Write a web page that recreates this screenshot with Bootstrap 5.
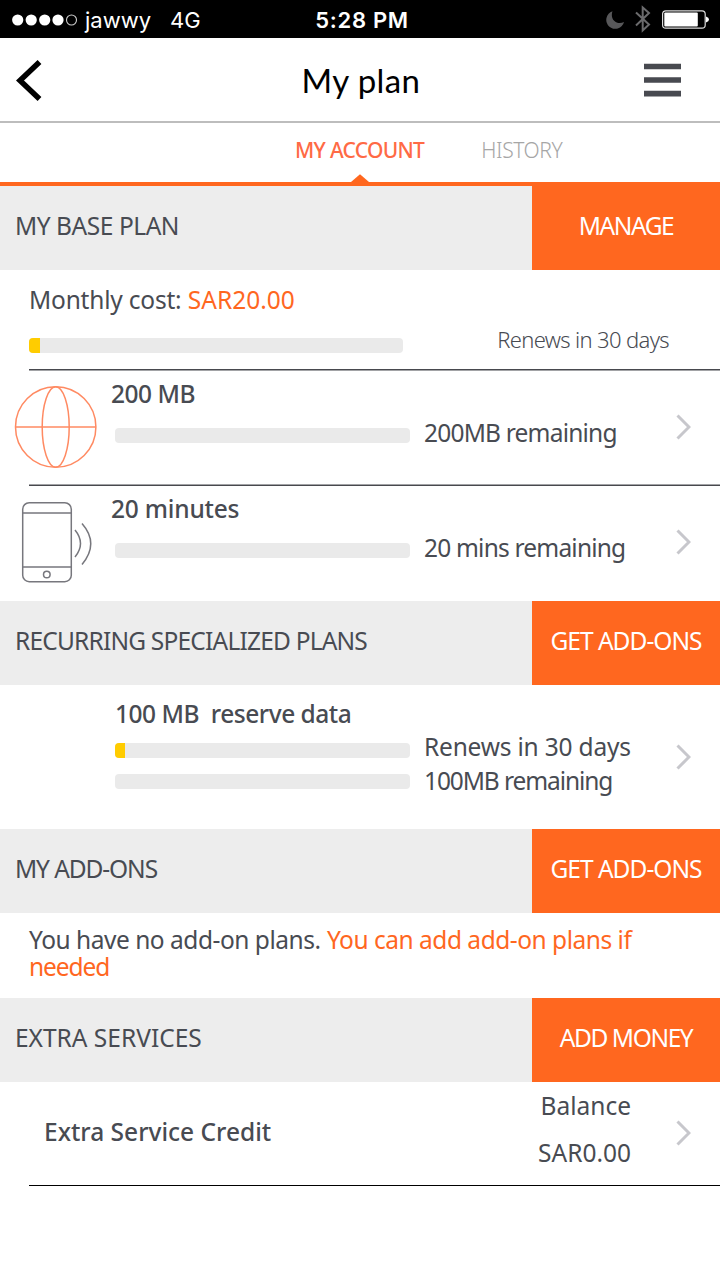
<!DOCTYPE html>
<html lang="en">
<head>
<meta charset="utf-8">
<meta name="viewport" content="width=device-width, initial-scale=1">
<title>My plan</title>
<link href="https://cdn.jsdelivr.net/npm/bootstrap@5.3.0/dist/css/bootstrap.min.css" rel="stylesheet">
<style>
body{font-family:"Noto Sans","Open Sans",sans-serif;font-size:24.5px;line-height:30px;color:#484b52;background:#fff;overflow-x:hidden}
svg{display:block;flex:none}
span{white-space:nowrap}
.status{height:38px;font-family:Inter,sans-serif;font-size:22px;padding:1px 11px 0 11px}
.status>div{flex:1 1 0}
.status .clock{font-weight:600;flex:none;letter-spacing:.7px;padding-left:4px}
.carrier{margin-left:6px}
.net{margin-left:19px}
.appbar{height:85px;border-bottom:2px solid #bdbdbd;padding:0 39px 0 15px}
.appbar>div{flex:1 1 0}
.title-text{font:400 33px/40px Lato,sans-serif;color:#000;letter-spacing:.4px;padding-left:26px}
.tabs-row{height:63px;border-bottom:4px solid #ff671f;font-size:21px;position:relative;padding:12px 0 0 295px;gap:57px}
.tab-on{color:#ff6a45;font-weight:500;letter-spacing:-.7px}
.tab-off{color:#a6a6a6;font-weight:300;letter-spacing:-.4px}
.caret{position:absolute;left:351px;bottom:0}
.sec{height:84px;background:#ededed}
.sec-title{padding:0 0 4px 15px;letter-spacing:-.45px}
.act{width:188px;background:#ff671f;color:#fff;border:0;border-radius:0;padding:0 0 4px;font-size:24.5px;line-height:30px;font-weight:400;letter-spacing:-1px}
.act:hover{background:#f05c15;color:#fff}
.tight-1{letter-spacing:-1.1px}
.tight-2{letter-spacing:-1.4px}
.tight-3{letter-spacing:-.8px}
.tight-4{letter-spacing:-.48px}
.tight-5{letter-spacing:-.2px}
.tight-0{letter-spacing:0}
.o{color:#ff671f}
.meter{height:15px;border-radius:4px;background:#eaeaea;--bs-progress-bar-bg:#fc0}
.wide{width:374px}
.std{width:295px}
.usage .d-flex>.meter{margin-top:4px}
.meter-line{margin-top:9px;gap:14px}
.rule{height:2px;margin-left:29px}
.rule-a{background:linear-gradient(#48494e 50%,#a2a3a6 50%)}
.rule-b{background:linear-gradient(#a2a3a6 50%,#48494e 50%)}
.rule-c{height:1px;background:#000}
.summary{height:99px;padding:15px 51px 0 29px}
.summary .meter{margin-top:23px}
.usage{height:114px;padding-right:29px}
.usage>svg{margin-bottom:2px}
.usage-data{height:113px}
.usage-reserve{height:144px;padding-left:115px}
.usage-reserve>svg{margin-bottom:0}
.usage-credit{height:103px;padding-left:44px}
.pic{width:111px}
.usage-body{padding-top:8px}
.med{font-weight:500}
.thin{font-size:22px;font-weight:350;letter-spacing:-.65px;margin-top:9px}
.note{height:85px;padding:13px 50px 0 29px;line-height:27px}
.balance{line-height:47px;margin:-10px 45px 0 0}
.credit-name{padding-bottom:3px}
.reserve-meters{padding-top:14px}
.reserve-info{margin:1px 0 0 14px;line-height:33.500px}
</style>
</head>
<body>
<header>
  <div class="status bg-black text-white d-flex align-items-center">
    <div class="d-flex align-items-center">
      <svg width="68" height="14" viewBox="0 0 68 14" fill="#fff"><circle cx="6.7" cy="7" r="5.6"/><circle cx="20.2" cy="7" r="5.6"/><circle cx="33.7" cy="7" r="5.6"/><circle cx="47" cy="7" r="5.6"/><circle cx="60.5" cy="7" r="5" fill="none" stroke="#ccc" stroke-width="1.1"/></svg>
      <span class="carrier">jawwy</span><span class="net">4G</span>
    </div>
    <div class="clock">5:28 PM</div>
    <div class="d-flex justify-content-end align-items-center">
      <svg width="104" height="30" viewBox="605 5 104 30" fill="none">
        <path d="M612.500 11.300A9 9 0 1 0 624 22C617 25.500 609.500 19.500 612.500 11.300z" fill="#58585a"/>
        <path d="M636 12.500l13 12-6.300 6V7.500l6.300 5.500L636 25.500" stroke="#6b6b6d" stroke-width="2"/>
        <rect x="662.600" y="10.800" width="42.600" height="17.400" rx="3.200" stroke="#ddd" stroke-width="1.200"/>
        <rect x="664.300" y="12.500" width="33.500" height="14" rx="1" fill="#fff"/>
        <path d="M706 16.500q3 .8 3 3t-3 3z" fill="#fff"/>
      </svg>
    </div>
  </div>
  <div class="appbar d-flex align-items-center">
    <div><svg width="28" height="42" viewBox="14.500 60 28 42" fill="none" stroke="#000" stroke-width="5.500"><path d="M39 63L19.500 81.500 39 100"/></svg></div>
    <h1 class="title-text m-0">My plan</h1>
    <div class="d-flex justify-content-end"><svg width="37" height="34" viewBox="0 0 37 34" fill="#484a50"><path d="M0 .7h37v5.600H0zM0 14.300h37v5.500H0zM0 27.700h37v5.800H0z"/></svg></div>
  </div>
</header>
<nav class="tabs-row d-flex">
  <span class="tab-on">MY ACCOUNT</span>
  <span class="tab-off">HISTORY</span>
  <svg class="caret" width="18" height="8" viewBox="0 0 18 8" fill="#ff671f"><path d="M0 8L9 .3 18 8z"/></svg>
</nav>
<main>
  <div class="sec d-flex align-items-stretch">
    <div class="sec-title flex-grow-1 d-flex align-items-center"><span>MY BASE PLAN</span></div>
    <button class="act tight-2 btn"><span>MANAGE</span></button>
  </div>
  <div class="summary">
    <div><span class="tight-5">Monthly cost:</span> <span class="o">SAR20.00</span></div>
    <div class="d-flex justify-content-between">
      <div class="progress meter wide"><div class="progress-bar" style="width:3%"></div></div>
      <span class="thin">Renews in 30 days</span>
    </div>
  </div>
  <div class="rule rule-a"></div>
  <div class="usage usage-data d-flex">
    <div class="pic" style="padding:14px 0 0 14px">
      <svg width="84" height="84" viewBox="0 0 84 84" fill="none" stroke="#ff8a62" stroke-width="1.500"><circle cx="41.700" cy="42" r="40.200"/><ellipse cx="41.700" cy="42" rx="13.500" ry="40.200"/><path d="M1.500 42h80.400"/></svg>
    </div>
    <div class="usage-body flex-grow-1">
      <div class="med"><span class="tight-4">200 MB</span></div>
      <div class="meter-line d-flex align-items-center ms-1">
        <div class="progress meter std"></div><span class="tight-3">200MB remaining</span>
      </div>
    </div>
    <svg class="align-self-center" width="15" height="26" viewBox="0 0 15 26" fill="none" stroke="#c7c7cc" stroke-width="3"><path d="M1.500 1.500L13 13 1.500 24.500"/></svg>
  </div>
  <div class="rule rule-b"></div>
  <div class="usage d-flex">
    <div class="pic" style="padding:14px 0 0 20px">
      <svg width="74" height="84" viewBox="20 500 74 84" fill="none" stroke="#77777d" stroke-width="1.500"><rect x="22.700" y="502.700" width="48.600" height="79" rx="6.500"/><path d="M22.700 513h48.600M22.700 567h48.600"/><circle cx="46.800" cy="574.500" r="3.300"/><path d="M75 530q11 13.500 0 27M82 523.500q17.500 20 0 41"/></svg>
    </div>
    <div class="usage-body flex-grow-1">
      <div class="med"><span class="tight-5">20 minutes</span></div>
      <div class="meter-line d-flex align-items-center ms-1">
        <div class="progress meter std"></div><span class="tight-3">20 mins remaining</span>
      </div>
    </div>
    <svg class="align-self-center" width="15" height="26" viewBox="0 0 15 26" fill="none" stroke="#c7c7cc" stroke-width="3"><path d="M1.500 1.500L13 13 1.500 24.500"/></svg>
  </div>
  <div class="rule" style="height:1px"></div>
  <div class="sec d-flex align-items-stretch">
    <div class="sec-title flex-grow-1 d-flex align-items-center"><span class="tight-3">RECURRING SPECIALIZED PLANS</span></div>
    <button class="act btn"><span>GET ADD-ONS</span></button>
  </div>
  <div class="usage usage-reserve d-flex">
    <div class="usage-body pt-0 flex-grow-1" style="margin-top:14px">
      <div class="med"><span class="tight-4">100 MB&nbsp; reserve data</span></div>
      <div class="d-flex">
        <div class="reserve-meters">
          <div class="progress meter std"><div class="progress-bar" style="width:3.3%"></div></div>
          <div class="progress meter std mt-3"></div>
        </div>
        <div class="reserve-info"><span class="tight-5">Renews in 30 days</span><br><span class="tight-1">100MB remaining</span></div>
      </div>
    </div>
    <svg class="align-self-center" width="15" height="26" viewBox="0 0 15 26" fill="none" stroke="#c7c7cc" stroke-width="3"><path d="M1.500 1.500L13 13 1.500 24.500"/></svg>
  </div>
  <div class="sec d-flex align-items-stretch">
    <div class="sec-title flex-grow-1 d-flex align-items-center"><span class="tight-1">MY ADD-ONS</span></div>
    <button class="act btn"><span>GET ADD-ONS</span></button>
  </div>
  <div class="note"><span class="tight-4">You have no add-on plans.</span> <span class="o tight-4">You can add add-on plans if</span><br><span class="o tight-1">needed</span></div>
  <div class="sec d-flex align-items-stretch">
    <div class="sec-title flex-grow-1 d-flex align-items-center"><span class="tight-0">EXTRA SERVICES</span></div>
    <button class="act tight-2 btn"><span>ADD MONEY</span></button>
  </div>
  <div class="usage usage-credit d-flex align-items-center">
    <div class="credit-name flex-grow-1 med"><span>Extra Service Credit</span></div>
    <div class="balance text-end"><span>Balance</span><br><span>SAR0.00</span></div>
    <svg width="15" height="26" viewBox="0 0 15 26" fill="none" stroke="#c7c7cc" stroke-width="3"><path d="M1.500 1.500L13 13 1.500 24.500"/></svg>
  </div>
  <div class="rule rule-c"></div>
</main>
<script src="https://cdn.jsdelivr.net/npm/bootstrap@5.3.0/dist/js/bootstrap.bundle.min.js"></script>
</body>
</html>
